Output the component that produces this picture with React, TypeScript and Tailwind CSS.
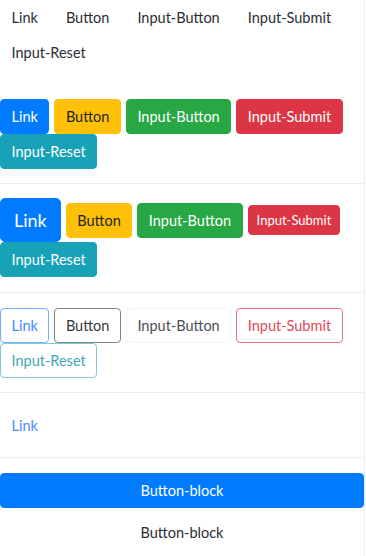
type Size = "sm" | "md" | "lg";

const base = "inline-block rounded-[4px] border text-center align-middle whitespace-nowrap";

const sizes: Record<Size, string> = {
  sm: "px-[8px] py-[5px] text-[13px] leading-[18px] rounded-[3px]",
  md: "px-[10.5px] py-[6px] text-[14.5px] leading-[21px]",
  lg: "px-[13px] py-[8px] text-[18px] leading-[26px] rounded-[5px]",
};

const variants: Record<string, string> = {
  plain: "border-transparent text-[#2a2e33] bg-transparent",
  primary: "border-[#007bff] bg-[#007bff] text-white",
  warning: "border-[#ffc107] bg-[#ffc107] text-[#212529]",
  success: "border-[#28a745] bg-[#28a745] text-white",
  danger: "border-[#dc3545] bg-[#dc3545] text-white",
  info: "border-[#17a2b8] bg-[#17a2b8] text-white",
  oPrimary: "border-[#6cb2ff] text-[#3d8bff] bg-white",
  oSecondary: "border-[#7d8388] text-[#343a40] bg-white",
  oLight: "border-[#f3f4f5] text-[#495057] bg-white",
  oDanger: "border-[#e8737e] text-[#e04a58] bg-white",
  oInfo: "border-[#7fcbd6] text-[#45a6b6] bg-white",
  link: "border-transparent text-[#4a8dff] bg-transparent",
};

function Btn({ label, v, size = "md", block }: { label: string; v: string; size?: Size; block?: boolean }) {
  return (
    <button className={`${base} ${sizes[size]} ${variants[v]} ${block ? "block w-full" : ""}`}>
      {label}
    </button>
  );
}

export default function App() {
  const row = "flex flex-wrap items-center gap-x-[5px]";

  return (
    <div
      className="w-[365px] min-h-[556px] border-r border-[#eeeeee] bg-white"
      style={{ fontFamily: 'Lato, "Open Sans", sans-serif' }}
    >
      <div className={`${row} pb-[13px]`}>
        <Btn label="Link" v="plain" />
        <Btn label="Button" v="plain" />
        <Btn label="Input-Button" v="plain" />
        <Btn label="Input-Submit" v="plain" />
        <Btn label="Input-Reset" v="plain" />
      </div>

      <div className="pt-[16px] pb-[14px] border-b border-[#ebebeb]">
        <div className={row}>
          <Btn label="Link" v="primary" />
          <Btn label="Button" v="warning" />
          <Btn label="Input-Button" v="success" />
          <Btn label="Input-Submit" v="danger" />
          <Btn label="Input-Reset" v="info" />
        </div>
      </div>

      <div className="pt-[14px] pb-[15px] border-b border-[#ebebeb]">
        <div className={row}>
          <Btn label="Link" v="primary" size="lg" />
          <Btn label="Button" v="warning" />
          <Btn label="Input-Button" v="success" />
          <Btn label="Input-Submit" v="danger" size="sm" />
          <Btn label="Input-Reset" v="info" />
        </div>
      </div>

      <div className="pt-[15px] pb-[14px] border-b border-[#ebebeb]">
        <div className={row}>
          <Btn label="Link" v="oPrimary" />
          <Btn label="Button" v="oSecondary" />
          <Btn label="Input-Button" v="oLight" />
          <Btn label="Input-Submit" v="oDanger" />
          <Btn label="Input-Reset" v="oInfo" />
        </div>
      </div>

      <div className="pt-[15px] pb-[14px] border-b border-[#ebebeb]">
        <Btn label="Link" v="link" />
      </div>

      <div className="pt-[15px]">
        <Btn label="Button-block" v="primary" block />
        <div className="mt-[7px]">
          <Btn label="Button-block" v="plain" block />
        </div>
      </div>
    </div>
  );
}
